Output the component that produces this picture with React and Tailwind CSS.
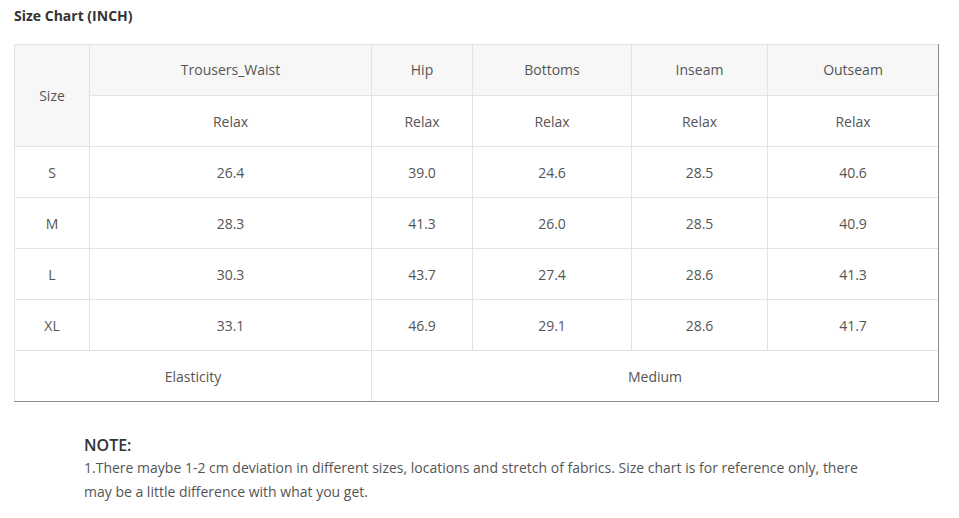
const headers = ['Trousers_Waist', 'Hip', 'Bottoms', 'Inseam', 'Outseam'];

const rows = [
  ['S', '26.4', '39.0', '24.6', '28.5', '40.6'],
  ['M', '28.3', '41.3', '26.0', '28.5', '40.9'],
  ['L', '30.3', '43.7', '27.4', '28.6', '41.3'],
  ['XL', '33.1', '46.9', '29.1', '28.6', '41.7'],
];

const cell = 'h-[51px] p-0 text-center align-middle font-normal border-l border-t border-[#e3e3e3]';

export default function App() {
  return (
    <div className="w-[959px] h-[518px] bg-white pt-[6px] px-[14px] text-[#555]" style={{ fontFamily: '"Open Sans", "Liberation Sans", sans-serif' }}>
      <h2 className="h-[20px] leading-[20px] text-[14px] font-bold text-[#333]">Size Chart (INCH)</h2>

      <div className="mt-[18px] w-[925px] border-r border-b border-[#8c8c8c]">
        <table className="w-full table-fixed border-separate border-spacing-0 text-[14px]">
          <colgroup>
            <col className="w-[75px]" />
            <col className="w-[282px]" />
            <col className="w-[101px]" />
            <col className="w-[159px]" />
            <col className="w-[136px]" />
            <col className="w-[171px]" />
          </colgroup>
          <thead>
            <tr className="bg-[#f7f7f7]">
              <th rowSpan={2} className={`${cell} h-[102px]`}>Size</th>
              {headers.map(h => (
                <th key={h} className={`${cell} pb-[2px]`}>{h}</th>
              ))}
            </tr>
            <tr>
              {headers.map(h => (
                <th key={h} className={`${cell} bg-white`}>Relax</th>
              ))}
            </tr>
          </thead>
          <tbody>
            {rows.map(r => (
              <tr key={r[0]}>
                {r.map((v, i) => (
                  <td key={i} className={cell}>{v}</td>
                ))}
              </tr>
            ))}
            <tr>
              <td colSpan={2} className={cell}>Elasticity</td>
              <td colSpan={4} className={cell}>Medium</td>
            </tr>
          </tbody>
        </table>
      </div>

      <div className="mt-[32px] ml-[70px] w-[800px]">
        <p className="h-[22px] leading-[22px] text-[16px] font-semibold text-[#333]">NOTE:</p>
        <p className="leading-[24px] text-[14px] text-[#555]">
          1.There maybe 1-2 cm deviation in different sizes, locations and stretch of fabrics. Size chart is for reference only, there may be a little difference with what you get.
        </p>
      </div>
    </div>
  );
}
